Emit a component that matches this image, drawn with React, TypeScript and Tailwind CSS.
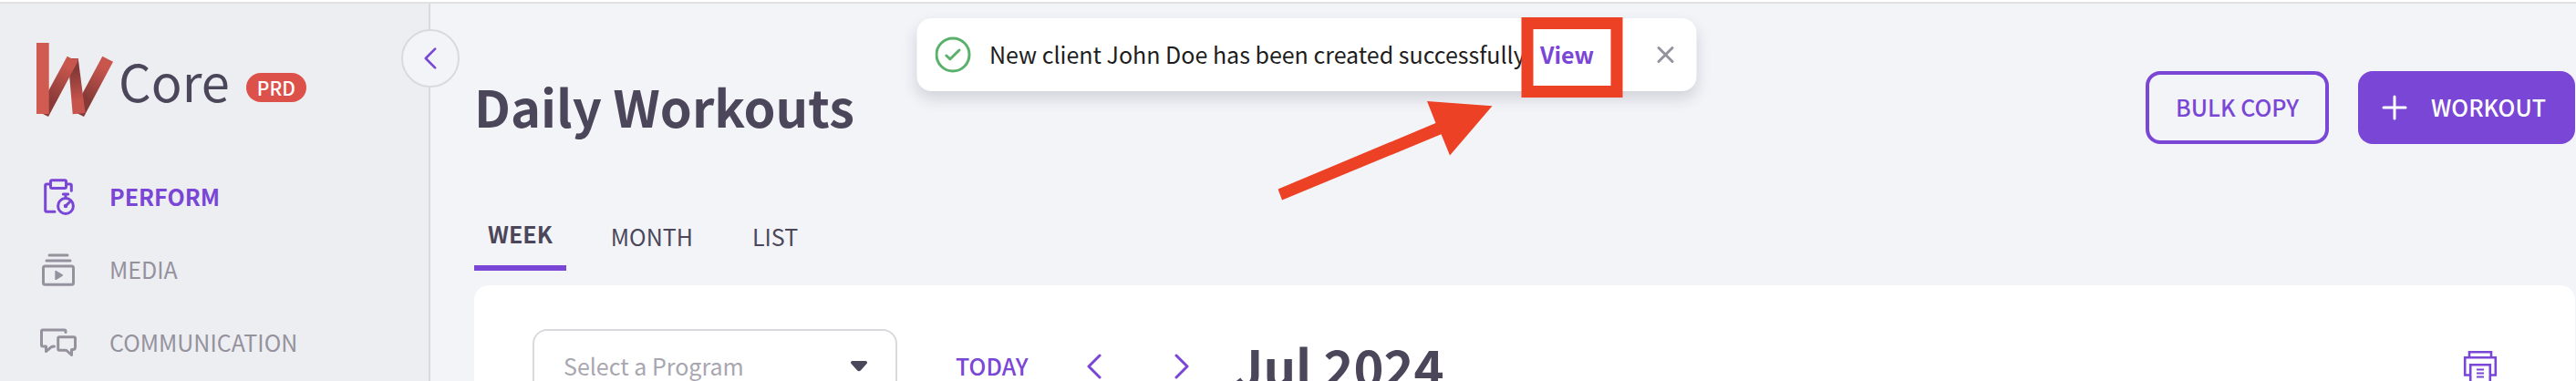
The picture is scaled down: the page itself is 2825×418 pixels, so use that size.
import type { ReactNode } from 'react';

const stroke = {
    fill: 'none',
    stroke: 'currentColor',
    strokeWidth: 3,
    strokeLinecap: 'round' as const,
    strokeLinejoin: 'round' as const,
};

function Logo() {
    return (
        <svg viewBox="0 0 86 84" className="w-[86px] h-[84px] shrink-0" aria-hidden="true">
            <defs>
                <linearGradient id="fold-a" gradientUnits="userSpaceOnUse" x1="38" y1="22" x2="14" y2="68">
                    <stop offset="0.1" stopColor="#c9564d" />
                    <stop offset="0.9" stopColor="#8a3b38" />
                </linearGradient>
                <linearGradient id="fold-b" gradientUnits="userSpaceOnUse" x1="40" y1="26" x2="46" y2="78">
                    <stop offset="0.1" stopColor="#833937" />
                    <stop offset="0.75" stopColor="#c6544c" />
                </linearGradient>
                <linearGradient id="fold-c" gradientUnits="userSpaceOnUse" x1="78" y1="18" x2="52" y2="64">
                    <stop offset="0.2" stopColor="#c9564d" />
                    <stop offset="0.95" stopColor="#853a37" />
                </linearGradient>
            </defs>
            <path d="M72.3 15.7 84 21.7 52 82 40 76Z" fill="url(#fold-c)" />
            <path d="M34.5 18 45.7 18 53.5 78 39.7 79.3Z" fill="url(#fold-b)" />
            <path d="M33.7 15.7 39 18.5 45.7 18 45 22 13 82 1 76Z" fill="url(#fold-a)" />
            <path d="M0 1H13.7V79H0Z" fill="#cf5b51" />
        </svg>
    );
}

function PerformIcon() {
    return (
        <svg viewBox="0 0 40 40" className="size-10" {...stroke}>
            <rect x="11.5" y="1.8" width="17" height="8.6" rx="1.5" />
            <path d="M11 6H7.2Q5.7 6 5.7 7.5V34.8Q5.7 36.3 7.2 36.3H16M29 6H32.8Q34.3 6 34.3 7.5V13.3" />
            <circle cx="28" cy="30" r="8.4" />
            <path d="M25.3 17H30.7M28 17V21M28 30 33 25" />
            <circle cx="28" cy="30" r="0.8" />
        </svg>
    );
}

function MediaIcon() {
    return (
        <svg viewBox="0 0 40 40" className="size-10" {...stroke}>
            <path d="M10 4H30M7 10H33" />
            <rect x="3.5" y="16" width="33" height="20.3" rx="2" />
            <path d="M17.2 21.8V30.2L24.2 26Z" fill="currentColor" strokeWidth="1.8" />
        </svg>
    );
}

function CommunicationIcon() {
    return (
        <svg viewBox="0 0 40 40" className="size-10" {...stroke}>
            <path d="M28 8.6V7.5Q28 6 26.5 6H3Q1.5 6 1.5 7.5V22.5Q1.5 24 3 24H6.5V29.5L12 24.8Q13 24 15.5 24" />
            <path d="M21.2 13.7H37Q38.5 13.7 38.5 15.2V24.5Q38.5 27.5 36 27.5H34.5V33.5L29.5 29Q28.7 28.3 27.5 28.3H21.2Q19.7 28.3 19.7 26.8V15.2Q19.7 13.7 21.2 13.7Z" />
        </svg>
    );
}

function PrinterIcon() {
    return (
        <svg viewBox="0 0 40 40" className="size-10" fill="none" stroke="currentColor" strokeWidth="2.6">
            <path d="M8 8V2.2H32V8M8.5 27.5H3.2V8.2H36.8V27.5H31.5" />
            <path d="M9.2 36V16.2H30.8V36Z" />
            <path d="M16 21.5H24M16 25.5H24M16 29.5H24" strokeWidth="2" />
        </svg>
    );
}

function Chevron({ direction, className }: { direction: 'left' | 'right'; className: string }) {
    return (
        <svg viewBox="0 0 16 28" className={className} {...stroke}>
            <path d={direction === 'left' ? 'M14 2 2 14 14 26' : 'M2 2 14 14 2 26'} />
        </svg>
    );
}

const navItems: { label: string; icon: ReactNode; active?: boolean }[] = [
    { label: 'PERFORM', icon: <PerformIcon />, active: true },
    { label: 'MEDIA', icon: <MediaIcon /> },
    { label: 'COMMUNICATION', icon: <CommunicationIcon /> },
];

const tabs = ['WEEK', 'MONTH', 'LIST'];

function Sidebar() {
    return (
        <aside className="relative w-[472px] shrink-0 border-r-2 border-[#dadade] bg-[#edeef2]">
            <div className="flex items-center pl-10 pt-[42px]">
                <Logo />
                <span className="ml-1 text-[56px] leading-[76px]">Core</span>
                <span className="ml-[18px] mt-4 flex h-8 items-center rounded-full bg-[#dc524b] px-3 text-[21px] leading-8 font-medium text-white">
                    PRD
                </span>
            </div>
            <nav className="mt-[46px]">
                {navItems.map((item) => (
                    <a
                        key={item.label}
                        href="#"
                        className={`flex h-20 items-center gap-9 pl-11 text-[25px] ${item.active ? 'font-bold text-[#7a46d6]' : 'text-[#95929d]'}`}
                    >
                        {item.icon}
                        {item.label}
                    </a>
                ))}
            </nav>
            {/* Collapse button sits on the sidebar edge */}
            <button
                aria-label="Collapse sidebar"
                className="absolute -right-[34px] top-7 flex size-16 items-center justify-center rounded-full border-2 border-[#dadade] bg-[#f3f4f8] text-[#7a46d6]"
            >
                <Chevron direction="left" className="h-6 w-4" />
            </button>
        </aside>
    );
}

function Toast() {
    return (
        <div
            role="status"
            className="absolute left-1/2 top-5 ml-5 flex h-20 w-[855px] -translate-x-1/2 items-center rounded-2xl bg-white px-5 text-[25px] whitespace-nowrap text-[#1e1e1e] shadow-[0_8px_16px_rgba(40,40,60,0.16)]"
        >
            <svg viewBox="0 0 40 40" className="size-10 shrink-0 text-[#59b16c]" {...stroke}>
                <circle cx="19.5" cy="20" r="18" />
                <path d="M12.3 21 16.5 24.8 26.5 15" />
            </svg>
            <span className="ml-5">New client John Doe has been created successfully</span>
            <a href="#" className="ml-auto mr-16 font-bold text-[#7a46d6]">
                View
            </a>
            <button aria-label="Dismiss" className="p-1 text-[#95929d]">
                <svg viewBox="0 0 20 20" className="size-5" {...stroke}>
                    <path d="M2.5 2.5 17.5 17.5M17.5 2.5 2.5 17.5" />
                </svg>
            </button>
            {/* Callout around the link, with an arrow to it */}
            <div className="absolute left-[663px] -top-px h-[88px] w-[111px] border-[13px] border-[#ec4125]" />
            <svg viewBox="0 0 236 110" className="absolute left-[396px] top-[90px] h-[110px] w-[236px]" fill="#ec4125">
                <path d="M0 97.5 173 25 163.5 1 235 6.3 188.5 60.5 179 37.3 4.5 109.5Z" />
            </svg>
        </div>
    );
}

export default function App() {
    return (
        <div className="relative flex h-screen flex-col overflow-hidden bg-white font-['Noto_Sans_CJK_SC',sans-serif] text-[#4b465a]">
            <div className="mt-0.5 flex min-h-0 flex-1 border-t-2 border-[#e2e2df]">
                <Sidebar />
                <main className="min-w-0 flex-1 bg-[#f3f4f8] pl-12 pr-px">
                    <header className="flex items-center gap-8 pt-[74px]">
                        <h1 className="mr-auto pb-1 text-[56px] leading-[76px] font-bold">Daily Workouts</h1>
                        <button className="h-20 rounded-2xl border-4 border-[#7a46d6] px-[29px] text-[25px] font-medium text-[#7a46d6]">
                            BULK COPY
                        </button>
                        <button className="flex h-20 items-center gap-6 rounded-2xl bg-[#7a46d6] pl-6 pr-8 text-[25px] font-medium text-white">
                            <svg viewBox="0 0 32 32" className="size-8" {...stroke}>
                                <path d="M16 4V28M4 16H28" />
                            </svg>
                            WORKOUT
                        </button>
                    </header>
                    <div role="tablist" className="mt-[63px] flex gap-[33px] text-[25px]">
                        {tabs.map((tab, i) => (
                            <button
                                key={tab}
                                role="tab"
                                aria-selected={i === 0}
                                className={`h-19 pt-0.5 ${i === 0 ? 'border-b-6 border-[#7a46d6] px-[15px] font-bold' : 'px-4'}`}
                            >
                                {tab}
                            </button>
                        ))}
                    </div>
                    <section className="mt-4 flex items-center rounded-2xl bg-white px-16 pt-12 pb-16">
                        <div className="relative w-[400px]">
                            <select
                                aria-label="Program"
                                className="h-20 w-full appearance-none rounded-2xl border-2 border-[#dadade] bg-white pt-0.5 pl-8 text-[25px] text-[#a8a6af]"
                            >
                                <option>Select a Program</option>
                            </select>
                            <svg viewBox="0 0 20 12" className="pointer-events-none absolute right-8 top-[35px] h-3 w-5" fill="currentColor">
                                <path d="M2.5 0H17.5Q20 .8 18.5 3L12 10.3Q10 12.2 8 10.3L1.5 3Q0 .8 2.5 0Z" />
                            </svg>
                        </div>
                        <div className="flex items-center pt-0.5 text-[#7a46d6]">
                            <button className="ml-16 text-[25px] font-medium">TODAY</button>
                            <button aria-label="Previous" className="ml-16">
                                <Chevron direction="left" className="h-7 w-4" />
                            </button>
                            <button aria-label="Next" className="ml-20">
                                <Chevron direction="right" className="h-7 w-4" />
                            </button>
                        </div>
                        <h2 className="ml-[50px] text-[56px] leading-20 font-bold">Jul 2024</h2>
                        <button aria-label="Print" className="ml-auto mr-5 pt-1.5 text-[#7a46d6]">
                            <PrinterIcon />
                        </button>
                    </section>
                </main>
            </div>
            <Toast />
        </div>
    );
}
